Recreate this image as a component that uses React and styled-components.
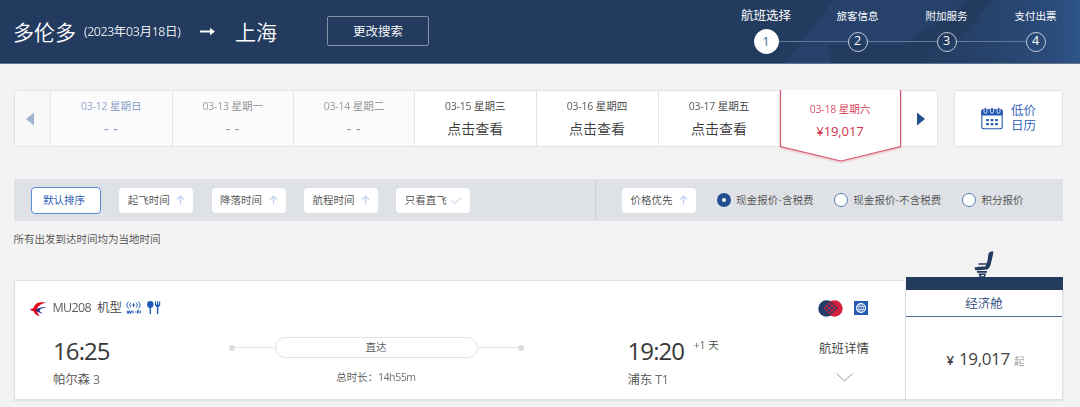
import React from 'react';
import styled, { createGlobalStyle } from 'styled-components';

const GlobalStyle = createGlobalStyle`
  * { box-sizing: border-box; }
  body {
    margin: 0;
    background: #f3f3f3;
    color: #4c4c4c;
    font-family: "Open Sans", "Noto Sans CJK SC", sans-serif;
    font-weight: 350;
    overflow: hidden;
  }
`;

const Page = styled.div`
  width: 1080px;
  height: 407px;
  overflow: hidden;
`;

const Label = styled.span`
  font-size: ${(p) => p.$size || 10.5}px;
  font-weight: ${(p) => p.$weight || 'inherit'};
  letter-spacing: ${(p) => p.$track || 0}px;
  color: ${(p) => p.$color || 'inherit'};
  line-height: 1;
  white-space: nowrap;
`;
const Num = styled.span`
  font-weight: 400;
  letter-spacing: ${(p) => p.$track || 0}px;
  opacity: 0.85;
`;

/* header */
const Header = styled.header`
  position: relative;
  display: flex;
  height: 64px;
  padding-left: 13px;
  background: #233b5f;
  border-bottom: 1px solid #62748f;
  color: #fff;
`;
const HeaderArt = styled.svg`
  position: absolute;
  right: 0;
  top: 0;
`;
const Route = styled.div`
  display: flex;
  align-items: center;
  width: 315px;
  height: 64px;
`;
const RouteFrom = styled.div`width: 71px; display: flex;`;
const RouteDate = styled.div`width: 116px; display: flex;`;
const RouteArrow = styled.svg`margin-right: 19px;`;
const ChangeButton = styled.button`
  width: 102px;
  height: 30px;
  margin-top: 16px;
  padding: 0 0 2px;
  border: 1px solid #8390a5;
  border-radius: 2px;
  background: transparent;
  color: #fff;
  font: inherit;
  line-height: 1;
`;
const Steps = styled.ol`
  position: relative;
  display: grid;
  grid-template-columns: 94px 89px 89px 89px;
  margin: 0 0 0 290px;
  padding: 0;
  list-style: none;
`;
const StepItem = styled.li`
  display: grid;
  grid-template-rows: 29px 25px;
  justify-items: center;
  align-items: center;
`;
const StepName = styled.div`padding-top: 3px; display: flex; font-weight: 400;`;
const StepRow = styled.div`
  display: grid;
  grid-template-columns: 1fr auto 1fr;
  align-items: center;
  width: 100%;
`;
const StepLine = styled.i`height: 1px; background: ${(p) => (p.$hidden ? 'transparent' : '#65789a')};`;
const StepDot = styled.div`
  display: flex;
  align-items: center;
  justify-content: center;
  width: ${(p) => (p.$active ? 25 : 20)}px;
  height: ${(p) => (p.$active ? 25 : 20)}px;
  border: 1px solid ${(p) => (p.$active ? '#fff' : '#c3cbd8')};
  border-radius: 50%;
  background: ${(p) => (p.$active ? '#fff' : 'transparent')};
  color: ${(p) => (p.$active ? '#4a6a9c' : '#fff')};
  font-weight: 400;
`;

/* dates */
const DateRow = styled.section`
  display: flex;
  height: 57px;
  margin: 26px 0 0 14px;
`;
const DateStrip = styled.div`
  display: grid;
  grid-template-columns: 35px 121.5px 121.5px 121px 121.5px 122px 122px 121px 1fr;
  width: 924px;
  border: 1px solid #e2e3e4;
  border-radius: 3px;
  background: #fff;
`;
const Pager = styled.button`
  display: flex;
  align-items: center;
  justify-content: center;
  padding: 0 ${(p) => (p.$off ? '5px 0 0' : '0 0 4px')};
  border: 0;
  border-radius: 3px;
  background: ${(p) => (p.$off ? '#f8f8f8' : '#fff')};
`;
const DateCell = styled.div`
  display: flex;
  flex-direction: column;
  align-items: center;
  gap: 10px;
  padding-top: 10px;
  border-left: 1px solid #e4e5e6;
  background: ${(p) => (p.$off ? '#fbfbfb' : '#fff')};
  color: ${(p) => p.$color};
`;
const ActiveDate = styled.div`
  position: relative;
  display: flex;
  flex-direction: column;
  align-items: center;
  gap: 10.5px;
  padding-top: 13px;
  color: #cf2f4d;
`;
const ActiveFrame = styled.svg`
  position: absolute;
  left: -2px;
  top: -1px;
  filter: drop-shadow(0 1px 1px rgba(210, 60, 88, 0.35));
`;
const ActiveText = styled.div`
  position: relative;
  display: flex;
`;
const CalendarButton = styled.button`
  display: flex;
  align-items: center;
  gap: 8.5px;
  width: 109px;
  margin-left: 16px;
  padding: 0 0 0 25.5px;
  border: 1px solid #e2e3e4;
  border-radius: 3px;
  background: #fff;
  color: #2558ba;
  font: inherit;
`;
const CalendarText = styled.span`
  width: 28px;
  font-size: 12.5px;
  line-height: 14.5px;
  text-align: left;
`;

/* filters */
const FilterBar = styled.section`
  display: flex;
  width: 1049px;
  height: 42px;
  margin: 32px 0 0 14px;
  border-radius: 2px;
  background: #dee1e6;
`;
const SortGroup = styled.div`
  display: flex;
  align-items: center;
  gap: 18.3px;
  width: 582px;
  padding-left: 17px;
  border-right: 1px solid #cdd1d5;
`;
const PriceGroup = styled.div`
  display: flex;
  align-items: center;
  padding-left: 26px;
`;
const Chip = styled.button`
  display: flex;
  align-items: center;
  justify-content: ${(p) => (p.$active ? 'flex-start' : 'space-between')};
  flex: none;
  width: ${(p) => (p.$active ? 70 : 74)}px;
  height: ${(p) => (p.$active ? 27 : 25)}px;
  padding: 0 ${(p) => (p.$active ? '0 0 11px' : '8px 0 8.5px')};
  border: ${(p) => (p.$active ? '1px solid #5d8bd2' : '0')};
  border-radius: 4px;
  background: #fff;
  color: ${(p) => (p.$active ? '#1450b4' : '#4c4c4c')};
  font: inherit;
`;
const Choice = styled.label`
  display: flex;
  align-items: center;
  gap: 5px;
  margin-left: ${(p) => p.$gap}px;
`;
const Radio = styled.i`
  width: 14px;
  height: 14px;
  border: ${(p) => (p.$on ? '5px solid #24508f' : '1px solid #5278b0')};
  border-radius: 50%;
  background: #fff;
`;
const Notice = styled.p`
  display: flex;
  margin: 13px 0 0 13.5px;
  height: 11px;
`;

/* flight */
const Flight = styled.section`
  display: flex;
  align-items: flex-end;
  width: 1049px;
  margin: 6px 0 0 14px;
`;
const FlightCard = styled.article`
  display: grid;
  grid-template-columns: 213.5px 295px 291.5px 1fr;
  grid-template-rows: 56px 1fr;
  width: 891px;
  height: 120px;
  border: 1px solid #dcdddf;
  border-right: 0;
  background: #fff;
  box-shadow: 0 1px 2px rgba(0, 0, 0, 0.08);
`;
const FlightTitle = styled.div`
  grid-column: 1 / 4;
  display: flex;
  align-items: center;
  padding: 0 0 1px 15px;
  color: #3f3f3f;
`;
const FlightCode = styled.div`width: 44.5px; margin-left: 5.5px; display: flex;`;
const FlightType = styled.div`width: 29px; display: flex;`;
const AmenityIcon = styled.svg`margin: 0 6px 2px 0;`;
const Badges = styled.div`
  display: flex;
  align-items: center;
  gap: 11.5px;
  padding: 0 0 2px 2.5px;
`;
const Endpoint = styled.div`
  display: flex;
  flex-direction: column;
  padding: 2px 0 0 ${(p) => p.$inset}px;
  gap: 11px;
`;
const ClockRow = styled.div`display: flex; align-items: flex-start; color: #383838;`;
const DayShift = styled.div`margin: 1px 0 0 9.5px; display: flex; color: #444;`;
const Journey = styled.div`
  display: flex;
  flex-direction: column;
  align-items: center;
  gap: 14px;
  color: #555;
`;
const Track = styled.div`
  display: grid;
  grid-template-columns: 6px 1fr 203px 1fr 6px;
  align-items: center;
  width: 295px;
`;
const TrackEnd = styled.i`width: 6px; height: 6px; border-radius: 50%; background: #dcdcdc;`;
const TrackLine = styled.i`height: 1px; background: #e3e3e3;`;
const TrackPill = styled.div`
  display: flex;
  align-items: center;
  justify-content: center;
  height: 21px;
  padding-bottom: 1px;
  border: 1px solid #e2e2e2;
  border-radius: 11px;
`;
const Details = styled.div`
  display: flex;
  flex-direction: column;
  align-items: flex-start;
  padding: 6px 0 0 4px;
  color: #3a3a3a;
`;
const Chevron = styled.svg`margin: 17px 0 0 17px;`;
const Cabin = styled.aside`
  display: flex;
  flex-direction: column;
  align-items: center;
  width: 158px;
`;
const CabinBar = styled.div`width: 157px; height: 13px; background: #233b5f;`;
const CabinBox = styled.div`
  display: grid;
  grid-template-rows: 27px 1fr;
  width: 158px;
  height: 110px;
  border: 1px solid #dfe0e6;
  border-top: 0;
  background: #fff;
  box-shadow: 0 1px 2px rgba(0, 0, 0, 0.08);
`;
const CabinName = styled.div`
  display: flex;
  align-items: center;
  justify-content: center;
  padding-top: 2px;
  border-bottom: 1px solid #576e93;
`;
const Price = styled.div`
  display: flex;
  align-items: baseline;
  padding: 31px 0 0 40.5px;
`;
const PriceValue = styled.div`width: 55px; margin-left: 5px;`;

const ArrowUp = () => (
  <svg width="9" height="10" viewBox="0 0 9 10" fill="none" stroke="#bfd1f5" strokeWidth="1.200">
    <path d="M4.5 9V1.2M1 4.6L4.5 1.2L8 4.6" />
  </svg>
);
const Check = () => (
  <svg width="11" height="9" viewBox="0 0 11 9" fill="none" stroke="#b3c7ed">
    <path d="M1 4.6L4 7.6L10.2 1.2" />
  </svg>
);
const Triangle = ({ left, color }) => (
  <svg width="8" height="14" viewBox="0 0 8 14" fill={color}>
    <path d={left ? 'M8 .5V13.5L0 7Z' : 'M0 .5V13.5L8 7Z'} />
  </svg>
);
const CalendarIcon = () => (
  <svg width="22" height="23" viewBox="0 0 22 23">
    <rect x=".8" y="2.6" width="20.4" height="19.2" rx="2" fill="#fff" stroke="#2a5cab" strokeWidth="1.1" />
    <path d="M.3 8.5V4.2a2 2 0 0 1 2-2H19.7a2 2 0 0 1 2 2V8.500Z" fill="#1f59b0" />
    <g fill="#1f59b0" stroke="#fff" strokeWidth=".8">
      {[4.5, 11, 17.5].map((x) => <rect key={x} x={x - 1.5} y=".5" width="3" height="5.8" rx="1.5" />)}
    </g>
    <g fill="#1f59b0">
      {[5.2, 9.7, 14.2].map((x) => [12, 16].map((y) => (
        <rect key={`${x}-${y}`} x={x} y={y} width="2.6" height="2.2" />
      )))}
    </g>
  </svg>
);
const AirlineLogo = () => (
  <svg width="17" height="14" viewBox="0 0 17 14">
    <path d="M16 .3C9 -.1 5.6 .2 3.8 5.5Q3.4 6.6 0 7L2 9.1L3.8 9.2C4.6 12 6.5 13.7 9.8 14C8 12 7 10 7 8.1C7.2 4.4 10.5 2 16 .3Z" fill="#e2061b" />
    <path d="M17 5C11.5 4.7 6 6.8 5.5 8.2Q7.5 10.5 13 11.4C11.3 10.5 9.7 9.8 9.5 8.6C9.8 7 12.5 6 17 5Z" fill="#28308a" />
  </svg>
);
const WifiIcon = () => (
  <AmenityIcon width="15" height="13" viewBox="0 0 15 13" fill="none" stroke="#2a5fb8">
    <path d="M2.6 .6Q-.8 4 2.6 7.6M4.6 1.8Q2.7 4 4.6 6.4M12.4 .6Q15.8 4 12.4 7.6M10.4 1.8Q12.3 4 10.4 6.4" />
    <path d="M7.5 2.3V6M5.9 4.1H9.1" />
    <path d="M.8 9.7L2 12.3L3.2 9.9L4.4 12.3L5.6 9.7M7 9.6V12.6M9 11H10.5M11.6 12.6V9.9H13.2M11.6 11.2H13M14.3 9.6V12.6" strokeWidth="1.1" />
  </AmenityIcon>
);
const MealIcon = () => (
  <AmenityIcon width="14" height="13" viewBox="0 0 14 13" fill="#1d5cb6">
    <ellipse cx="3.3" cy="3.4" rx="3.2" ry="3.4" />
    <path d="M2.6 6H4V13H2.6ZM8 .2H9V3.6H10V.2H11.2V3.6H12.1V.2H13.2V4Q13.1 5.6 11.3 6V13H9.9V6Q8.1 5.6 8 4Z" />
  </AmenityIcon>
);
const AllianceLogo = () => (
  <svg width="25" height="17" viewBox="0 0 25 17">
    <circle cx="8.5" cy="8.5" r="8.2" fill="#203c68" />
    <circle cx="16.5" cy="8.5" r="8.2" fill="#d3213f" />
    <path d="M12.5 1.3A8.2 8.2 0 0 0 12.5 15.7Z" fill="#203c68" />
    <g fill="#d3213f">
      {[[11, 3.8], [8.8, 6], [11, 8.2], [6.6, 8.2], [8.8, 10.4], [11, 12.6]].map(([x, y]) => (
        <path key={`${x}-${y}`} d={`M${x} ${y - 1.4}l1.4 1.4l-1.4 1.4l-1.4 -1.4z`} />
      ))}
    </g>
    <g fill="#203c68">
      {[[14, 3.8], [16.2, 6], [14, 8.2], [18.4, 8.2], [16.2, 10.4], [14, 12.6]].map(([x, y]) => (
        <path key={`${x}-${y}`} d={`M${x} ${y - 1.4}l1.4 1.4l-1.4 1.4l-1.4 -1.4z`} />
      ))}
    </g>
  </svg>
);
const GlobeBadge = () => (
  <svg width="14" height="14" viewBox="0 0 14 14" fill="none" stroke="#fff">
    <rect width="14" height="14" fill="#245bb5" stroke="none" />
    <circle cx="7" cy="7" r="4.5" strokeWidth="1.1" />
    <ellipse cx="7" cy="7" rx="2.2" ry="4.5" strokeWidth=".7" />
    <path d="M2.6 5.5H11.4M2.6 8.5H11.4M7 2.5V11.5" strokeWidth=".6" />
  </svg>
);
const SeatIcon = () => (
  <svg width="20" height="26" viewBox="0 0 20 26" fill="#233b5f">
    <path d="M14.3 3.5Q15 .3 19.2 .3Q19.4 2 18.6 5.3L16.7 13.5Q16 16 14.3 17.5H10.5Q12 14.5 13.6 9.5Z" />
    <path d="M4.5 12.3H13V13.7H4.5ZM.3 16.4Q6 14.9 14.5 15.6V17.8Q12 19.5 1.5 19.2ZM3 20H13V21.7H3ZM4.5 22.4H12L11 26H5.5Z" />
    <path d="M7 24H10V25.2H7Z" fill="#f3f3f3" />
  </svg>
);

const dates = [
  { day: '03-12', week: '星期日', off: true, color: '#7c96c2' },
  { day: '03-13', week: '星期一', off: true, color: '#8c8c8c' },
  { day: '03-14', week: '星期二', off: true, color: '#8c8c8c' },
  { day: '03-15', week: '星期三', color: '#3a3a3a' },
  { day: '03-16', week: '星期四', color: '#3a3a3a' },
  { day: '03-17', week: '星期五', color: '#3a3a3a' },
];
const steps = ['航班选择', '旅客信息', '附加服务', '支付出票'];

export default function App() {
  return (
    <Page>
      <GlobalStyle />
      <Header>
        <HeaderArt width="380" height="63" viewBox="700 0 380 63">
          <defs>
            <linearGradient id="glow">
              <stop offset="0" stopColor="#233b5f" />
              <stop offset=".55" stopColor="#27456f" />
              <stop offset=".85" stopColor="#2b4c7c" />
              <stop offset="1" stopColor="#305589" />
            </linearGradient>
          </defs>
          <rect x="920" width="160" height="63" fill="url(#glow)" />
          <path d="M834 0H966L903 45H827L832 63H785Z" fill="#26416a" />
          <path d="M966 0H992Q975 25 950 45H903Q945 28 966 0Z" fill="#233b5f" />
        </HeaderArt>
        <Route>
          <RouteFrom><Label $size={21}>多伦多</Label></RouteFrom>
          <RouteDate>
            <Label $size={12.5} $track={-0.2}>
              <Num $track={-0.5}>(2023</Num>年<Num $track={-0.5}>03</Num>月<Num $track={-0.5}>18</Num>日<Num>)</Num>
            </Label>
          </RouteDate>
          <RouteArrow width="16" height="10" viewBox="0 0 16 10">
            <path d="M0 3.5H10V.8L15 4.5L10 8.2V5.5H0Z" fill="#fff" />
          </RouteArrow>
          <Label $size={21}>上海</Label>
        </Route>
        <ChangeButton><Label $size={12.5}>更改搜索</Label></ChangeButton>
        <Steps>
          {steps.map((name, i) => (
            <StepItem key={name}>
              <StepName><Label $size={i ? 10.5 : 12.5}>{name}</Label></StepName>
              <StepRow>
                <StepLine $hidden={i === 0} />
                <StepDot $active={i === 0}><Label $size={i ? 12.5 : 13}>{i + 1}</Label></StepDot>
                <StepLine $hidden={i === 3} />
              </StepRow>
            </StepItem>
          ))}
        </Steps>
      </Header>

      <DateRow>
        <DateStrip>
          <Pager $off><Triangle left color="#a3b4d0" /></Pager>
          {dates.map((d) => (
            <DateCell key={d.day} $off={d.off} $color={d.color}>
              <Label><Num $track={-0.25}>{d.day}</Num> {d.week}</Label>
              {d.off ? <Label $size={14} $weight={400} $track={0.6}>- -</Label> : <Label $size={14}>点击查看</Label>}
            </DateCell>
          ))}
          <ActiveDate>
            <ActiveFrame width="125" height="74" viewBox="0 0 125 74">
              <path d="M2.5 0V56.5L63 71L122.5 56.5V0" fill="#fff" stroke="#d75c74" strokeWidth="1.2" />
            </ActiveFrame>
            <ActiveText><Label><Num $track={-0.25}>03-18</Num> 星期六</Label></ActiveText>
            <ActiveText><Label $size={13} $weight={400} $track={-0.1}>¥19,017</Label></ActiveText>
          </ActiveDate>
          <Pager><Triangle color="#24508f" /></Pager>
        </DateStrip>
        <CalendarButton>
          <CalendarIcon />
          <CalendarText>低价 日历</CalendarText>
        </CalendarButton>
      </DateRow>

      <FilterBar>
        <SortGroup>
          <Chip $active><Label>默认排序</Label></Chip>
          <Chip><Label>起飞时间</Label><ArrowUp /></Chip>
          <Chip><Label>降落时间</Label><ArrowUp /></Chip>
          <Chip><Label>航程时间</Label><ArrowUp /></Chip>
          <Chip><Label>只看直飞</Label><Check /></Chip>
        </SortGroup>
        <PriceGroup>
          <Chip><Label>价格优先</Label><ArrowUp /></Chip>
          <Choice $gap={21}><Radio $on /><Label $track={0.1}>现金报价-含税费</Label></Choice>
          <Choice $gap={20.5}><Radio /><Label $track={0.1}>现金报价-不含税费</Label></Choice>
          <Choice $gap={21}><Radio /><Label>积分报价</Label></Choice>
        </PriceGroup>
      </FilterBar>
      <Notice><Label>所有出发到达时间均为当地时间</Label></Notice>

      <Flight>
        <FlightCard>
          <FlightTitle>
            <AirlineLogo />
            <FlightCode><Label $size={12.5}><Num $track={-0.65}>MU208</Num></Label></FlightCode>
            <FlightType><Label $size={12.5}>机型</Label></FlightType>
            <WifiIcon />
            <MealIcon />
          </FlightTitle>
          <Badges><AllianceLogo /><GlobeBadge /></Badges>
          <Endpoint $inset={38}>
            <ClockRow><Label $size={24} $weight={400} $track={-0.9}>16:25</Label></ClockRow>
            <Label $size={12.5} $track={-0.2} $color="#505050">帕尔森 <Num>3</Num></Label>
          </Endpoint>
          <Journey>
            <Track>
              <TrackEnd /><TrackLine />
              <TrackPill><Label>直达</Label></TrackPill>
              <TrackLine /><TrackEnd />
            </Track>
            <Label $track={-0.1}>总时长：<Num $track={-0.4}>14h55m</Num></Label>
          </Journey>
          <Endpoint $inset={104}>
            <ClockRow>
              <Label $size={24} $weight={400} $track={-0.9}>19:20</Label>
              <DayShift><Label><Num $track={-0.1}>+1</Num> 天</Label></DayShift>
            </ClockRow>
            <Label $size={12.5} $track={-0.2} $color="#505050">浦东 <Num $track={-0.4}>T1</Num></Label>
          </Endpoint>
          <Details>
            <Label $size={12.5}>航班详情</Label>
            <Chevron width="17" height="9" viewBox="0 0 17 9" fill="none" stroke="#999">
              <path d="M.7 .7L8.5 8L16.3 .7" />
            </Chevron>
          </Details>
        </FlightCard>
        <Cabin>
          <SeatIcon />
          <CabinBar />
          <CabinBox>
            <CabinName><Label $size={12.5} $color="#2a4679">经济舱</Label></CabinName>
            <Price>
              <Label $size={13} $weight={600} $color="#444">¥</Label>
              <PriceValue><Label $size={17} $weight={400} $track={-0.35} $color="#444">19,017</Label></PriceValue>
              <Label $color="#8f8f8f">起</Label>
            </Price>
          </CabinBox>
        </Cabin>
      </Flight>
    </Page>
  );
}
